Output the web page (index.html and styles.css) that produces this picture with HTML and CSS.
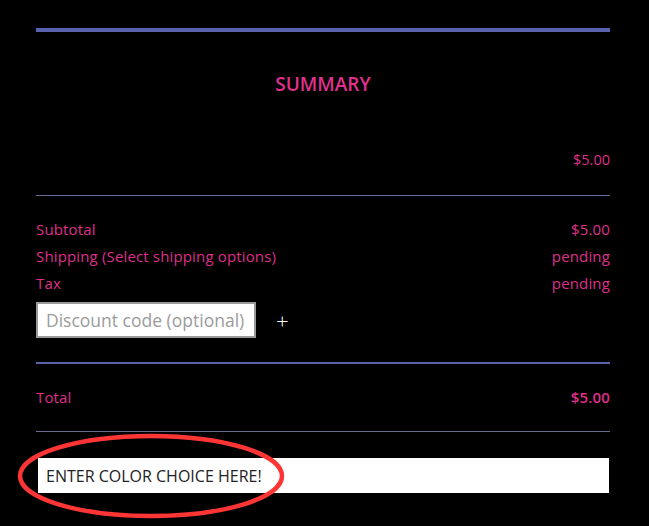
FILE: index.html
```html
<!DOCTYPE html>
<html>
<head>
<meta charset="utf-8">
<link rel="stylesheet" href="styles.css">
</head>
<body>
<div class="summary">
  <div class="topbar"></div>
  <h2 class="title">SUMMARY</h2>
  <div class="item-row"><span>$5.00</span></div>
  <div class="rule thin"></div>
  <div class="rows">
    <div class="row"><span>Subtotal</span><span>$5.00</span></div>
    <div class="row"><span>Shipping (Select shipping options)</span><span>pending</span></div>
    <div class="row"><span>Tax</span><span>pending</span></div>
  </div>
  <div class="discount">
    <input class="discount-input" type="text" placeholder="Discount code (optional)">
    <span class="plus">+</span>
  </div>
  <div class="rule thick"></div>
  <div class="row total"><span>Total</span><span class="total-amt">$5.00</span></div>
  <div class="rule thin"></div>
  <div class="color-field">
    <input class="color-input" type="text" value="ENTER COLOR CHOICE HERE!">
    <svg class="circle" width="280" height="96" viewBox="0 0 280 96">
      <ellipse cx="135" cy="45" rx="131" ry="40" fill="none" stroke="#fd3535" stroke-width="4.5"/>
    </svg>
  </div>
</div>
</body>
</html>
```
FILE: styles.css
```css
html, body {
  margin: 0;
  padding: 0;
  background: #000;
}
body {
  min-height: 526px;
  font-family: "Open Sans", "Liberation Sans", sans-serif;
  color: #df2f8a;
}
.summary {
  width: 574px;
  margin-left: 36px;
  padding-top: 28px;
  padding-bottom: 40px;
}
.topbar {
  height: 4px;
  background: #5a62ad;
}
.title {
  margin: 40px 0 0;
  height: 24px;
  line-height: 24px;
  text-align: center;
  font-size: 19px;
  font-weight: 600;
  color: #e0318d;
}
.item-row {
  margin-top: 52px;
  display: flex;
  justify-content: flex-end;
  font-size: 14.5px;
  font-weight: 400;
  line-height: 24px;
}
.rule.thin {
  height: 1px;
  background: #6a6d8f;
}
.item-row + .rule {
  margin-top: 23px;
}
.rows {
  margin-top: 20px;
}
.row {
  display: flex;
  justify-content: space-between;
  font-size: 15px;
  letter-spacing: 0.15px;
  font-weight: 400;
  line-height: 27px;
  height: 27px;
}
.discount {
  display: flex;
  align-items: center;
  margin-top: 5px;
  height: 36px;
}
.discount-input {
  box-sizing: border-box;
  width: 220px;
  height: 36px;
  border: 2px solid #9a9a9a;
  background: #fff;
  padding: 0 8px;
  font-family: "Open Sans", "Liberation Sans", sans-serif;
  font-size: 17.5px;
  font-weight: 400;
  outline: none;
}
.discount-input::placeholder {
  color: #9b9b9b;
}
.plus {
  margin-left: 20px;
  color: #fff;
  font-size: 22px;
  font-weight: 300;
  line-height: 20px;
}
.rule.thick {
  margin-top: 24px;
  height: 2px;
  background: #5a62ad;
}
.total {
  margin-top: 20px;
}
.total-amt {
  font-weight: 600;
}
.total + .rule {
  margin-top: 20px;
}
.color-field {
  position: relative;
  margin-top: 26px;
  padding-left: 2px;
}
.color-input {
  box-sizing: border-box;
  display: block;
  width: 571px;
  height: 35px;
  border: none;
  background: #fff;
  padding: 0 8px;
  font-family: "Open Sans", "Liberation Sans", sans-serif;
  font-size: 16px;
  font-weight: 400;
  color: #222;
  outline: none;
}
.circle {
  position: absolute;
  left: -20px;
  top: -27px;
}
```
